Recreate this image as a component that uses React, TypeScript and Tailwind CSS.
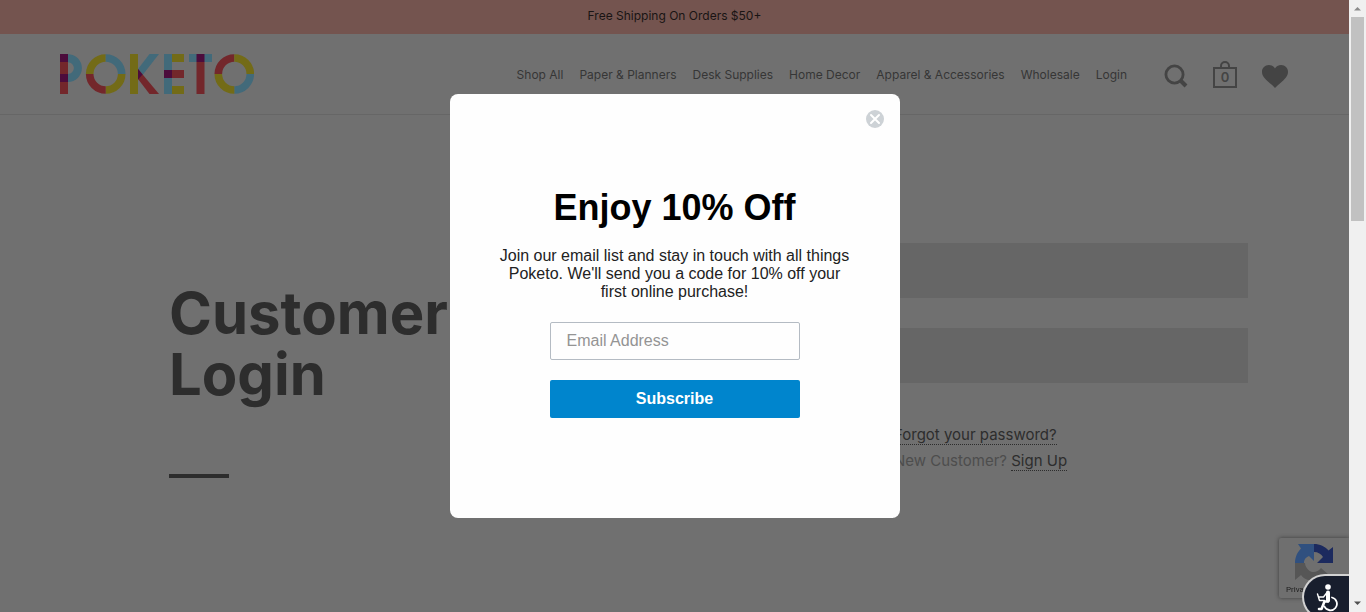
import React from "react";

const navItems = [
  "Shop All",
  "Paper & Planners",
  "Desk Supplies",
  "Home Decor",
  "Apparel & Accessories",
  "Wholesale",
  "Login",
];

const RED = "#73272b";
const YELLOW = "#736b17";
const BLUE = "#426a7a";
const PLUM = "#4c0c3c";

function Ring({ cx, colors }: { cx: number; colors: string[] }) {
  const r = 16;
  const c = 20;
  return (
    <g fill="none" strokeWidth="7.6">
      <path d={`M${cx - r} ${c}A${r} ${r} 0 0 1 ${cx} ${c - r}`} stroke={colors[0]} />
      <path d={`M${cx} ${c - r}A${r} ${r} 0 0 1 ${cx + r} ${c}`} stroke={colors[1]} />
      <path d={`M${cx + r} ${c}A${r} ${r} 0 0 1 ${cx} ${c + r}`} stroke={colors[2]} />
      <path d={`M${cx} ${c + r}A${r} ${r} 0 0 1 ${cx - r} ${c}`} stroke={colors[3]} />
    </g>
  );
}

function Logo() {
  return (
    <svg viewBox="0 0 194 40" className="h-10 w-[194px]" role="img" aria-label="Poketo">
      <path d="M0 0h8v40H0z" fill={RED} />
      <path d="M0 0h8v8H0zM0 20h8v8H0z" fill={PLUM} />
      <path d="M8 4.2a9.8 9.8 0 0 1 0 19.8" fill="none" stroke={BLUE} strokeWidth="8" />
      <Ring cx={45.7} colors={[YELLOW, BLUE, YELLOW, RED]} />
      <path d="M70 0h8v40h-8z" fill={YELLOW} />
      <path d="M89.5 0h9.5L83 20.500 78 26V15z" fill={BLUE} />
      <path d="M78 15l21 25h-9.500L78 25z" fill={RED} />
      <path d="M78 15l4.600 5.500L78 25.500z" fill={PLUM} />
      <path d="M104 0h8v40h-8z" fill={BLUE} />
      <path d="M112 0h12v8h-12zM112 32h12v8h-12z" fill={YELLOW} />
      <path d="M112 16h12v8h-12z" fill={RED} />
      <path d="M104 16h8v8h-8z" fill={PLUM} />
      <path d="M129 0h23v8h-23z" fill={BLUE} />
      <path d="M136.500 8h8v32h-8z" fill={RED} />
      <path d="M136.500 0h8v8h-8z" fill={PLUM} />
      <Ring cx={174.3} colors={[RED, YELLOW, BLUE, YELLOW]} />
    </svg>
  );
}

function SearchIcon() {
  return (
    <svg viewBox="0 0 24 24" className="size-6" fill="none" stroke="#444444" aria-hidden="true">
      <circle cx="10.500" cy="10.500" r="8.600" strokeWidth="2.800" />
      <path d="M16.500 16.500l5.500 5.500" strokeWidth="4" />
    </svg>
  );
}

function BagIcon() {
  return (
    <svg viewBox="0 0 24 27" className="h-[27px] w-6" fill="none" stroke="#444444" strokeWidth="2" aria-hidden="true">
      <path d="M1 7h22v19H1z" />
      <path d="M8 7V5a4 4 0 0 1 8 0v2" />
    </svg>
  );
}

function HeartIcon() {
  return (
    <svg viewBox="0 0 26 23" className="h-[23px] w-[26px]" fill="#444444" aria-hidden="true">
      <path d="M13 23C10 19.500 5 16.500 2.500 13 .8 10.800 0 9 0 6.700 0 3 3 0 6.800 0 9.500 0 12 1.400 13 3.600 14 1.400 16.500 0 19.200 0 23 0 26 3 26 6.700c0 2.300-.8 4.100-2.500 6.300C21 16.500 16 19.500 13 23z" />
    </svg>
  );
}

function Header() {
  return (
    <header>
      <p className="flex h-[34px] items-center justify-center bg-[#74544f] pb-0.5 font-[Inter,sans-serif] text-xs leading-5 text-[#191414]">
        Free Shipping On Orders $50+
      </p>
      <div className="flex h-[81px] items-center justify-between border-b border-[#666666] pr-[61px] pl-[60px]">
        <a href="#home">
          <Logo />
        </a>
        <div className="flex items-center">
          <nav className="flex gap-4 pt-0.5 pr-[37px] font-[Inter,sans-serif] text-xs text-[#363636]">
            {navItems.map((item) => (
              <a key={item} href="#nav" className="whitespace-nowrap">
                {item}
              </a>
            ))}
          </nav>
          <div className="flex items-end gap-[25px]">
            <button type="button" aria-label="Search">
              <SearchIcon />
            </button>
            <button type="button" aria-label="Cart" className="relative">
              <BagIcon />
              <span className="absolute inset-x-0 top-2 text-center font-[Inter,sans-serif] text-[13px] leading-4 font-semibold text-[#444444]">
                0
              </span>
            </button>
            <button type="button" aria-label="Wishlist">
              <HeartIcon />
            </button>
          </div>
        </div>
      </div>
    </header>
  );
}

function LoginSection() {
  return (
    <main className="flex justify-between pt-32 pr-[101px] pl-[169px]">
      <div className="pt-10">
        <h1 className="w-[300px] font-[Inter,sans-serif] text-[58px] leading-[61px] font-bold text-[#2d2d2d]">
          Customer Login
        </h1>
        <div className="mt-[69px] h-1 w-[60px] bg-[#2d2d2d]" />
      </div>
      <form className="w-[471px]">
        <input type="email" aria-label="Email" className="block h-[55px] w-full bg-[#666666]" />
        <input type="password" aria-label="Password" className="mt-[30px] block h-[55px] w-full bg-[#666666]" />
        <div className="mt-[39px] pl-[117px] font-[Inter,sans-serif] text-[15px] leading-[26px] text-[#4d4d4d]">
          <p>
            <a href="#recover" className="border-b border-dotted border-[#2d2d2d] text-[#2d2d2d]">
              Forgot your password?
            </a>
          </p>
          <p>
            New Customer?{" "}
            <a href="#register" className="border-b border-dotted border-[#2d2d2d] text-[#2d2d2d]">
              Sign Up
            </a>
          </p>
        </div>
      </form>
    </main>
  );
}

function SignupDialog() {
  return (
    <div className="fixed inset-y-0 right-[17px] left-0 flex items-center justify-center">
      <div
        role="dialog"
        aria-labelledby="offer-title"
        className="relative flex w-[450px] flex-col items-center rounded-lg bg-[#fefefe] px-12 pt-[93px] pb-[100px] font-['Liberation_Sans',Arial,sans-serif]"
      >
        <button type="button" aria-label="Close" className="absolute top-4 right-4">
          <svg viewBox="0 0 18 18" className="size-[18px]" aria-hidden="true">
            <circle cx="9" cy="9" r="9" fill="#cdd2d6" />
            <path d="M5 5l8 8M13 5l-8 8" stroke="#fff" strokeWidth="2" strokeLinecap="round" />
          </svg>
        </button>
        <h2 id="offer-title" className="text-4xl leading-[42px] font-bold text-black">
          Enjoy 10% Off
        </h2>
        <p className="mt-[18px] text-center text-base leading-[18px] text-[#222222]">
          Join our email list and stay in touch with all things Poketo. We'll send you a code for 10% off your
          first online purchase!
        </p>
        <form className="mt-[21px] flex w-[250px] flex-col gap-5">
          <input
            type="email"
            aria-label="Email Address"
            placeholder="Email Address"
            className="h-[38px] rounded-xs border border-[#b4bbc3] px-4 text-base text-black placeholder:text-[#949494]"
          />
          <button type="button" className="h-[38px] rounded-xs bg-[#0085cd] text-base font-bold text-white">
            Subscribe
          </button>
        </form>
      </div>
    </div>
  );
}

function RecaptchaBadge() {
  return (
    <div className="fixed right-[17px] bottom-[14px] h-[60px] w-[70px] overflow-hidden rounded-l-xs bg-[#6f6f6f] pt-1.5 pl-[7px] shadow-[0_0_4px_#3c3c3c]">
      <svg viewBox="0 0 38 37" className="ml-[9px] h-[37px] w-[38px]" aria-hidden="true">
        <path d="M19 0c6 0 11 2.500 14.500 6.500L38 3v16H22l6-6c-1.500-3-5-5-9-5z" fill="#1c2a5e" />
        <path d="M0 19C0 13 2.500 8 6 4.500L3 0h16v17l-5-5c-3 1.500-5 3-5 7z" fill="#30507f" />
        <path d="M0 19h10c0 3 2 6 4 7.500 4 3 9 1.500 12-2.500l8 7c-4 4.500-9 6-14 6-6 0-11-2-14-6l-6 5z" fill="#565656" />
      </svg>
      <span className="block pt-[3px] font-[Roboto,sans-serif] text-[8px] leading-3 whitespace-nowrap text-[#1c1c1c]">
        Privacy - Terms
      </span>
    </div>
  );
}

function AccessibilityButton() {
  return (
    <div className="fixed right-[17px] bottom-0 h-[38px] w-[47px] overflow-hidden">
      <button
        type="button"
        aria-label="Accessibility"
        className="flex h-[46px] w-full justify-center rounded-l-full border-2 border-r-0 border-[#d2d2d2] bg-[#181e2d] pt-2"
      >
        <svg viewBox="0 0 22 28" className="h-7 w-[22px]" fill="none" stroke="#fff" strokeWidth="2.200" strokeLinecap="round" strokeLinejoin="round" aria-hidden="true">
          <circle cx="12" cy="3" r="2.800" fill="#fff" stroke="none" />
          <path d="M12 8.500v8" strokeWidth="4" />
          <path d="M11 8.500l-3.500 4.500H3M1.500 10l2 6.500h5" strokeWidth="1.400" />
          <path d="M12 17.500H8.500L5.500 25H3" strokeWidth="2.600" />
          <path d="M16 13.500a6.500 6.500 0 1 1-7.500 9" strokeWidth="1.800" />
        </svg>
      </button>
    </div>
  );
}

function ScrollTrack() {
  return (
    <div className="fixed inset-y-0 right-0 flex w-[17px] flex-col items-center justify-between bg-[#f0f0f0]" aria-hidden="true">
      <div className="flex w-full flex-col items-center">
        <svg viewBox="0 0 17 17" className="size-[17px]">
          <path d="M5 10.500h7L8.500 7z" fill="#8a8a8a" />
        </svg>
        <div className="h-[204px] w-[13px] bg-[#c1c1c1]" />
      </div>
      <svg viewBox="0 0 17 17" className="size-[17px]">
        <path d="M5 6.500h7L8.500 10z" fill="#505050" />
      </svg>
    </div>
  );
}

export default function App() {
  return (
    <div className="min-h-screen bg-[#707070] pr-[17px]">
      <Header />
      <LoginSection />
      <SignupDialog />
      <RecaptchaBadge />
      <AccessibilityButton />
      <ScrollTrack />
    </div>
  );
}
